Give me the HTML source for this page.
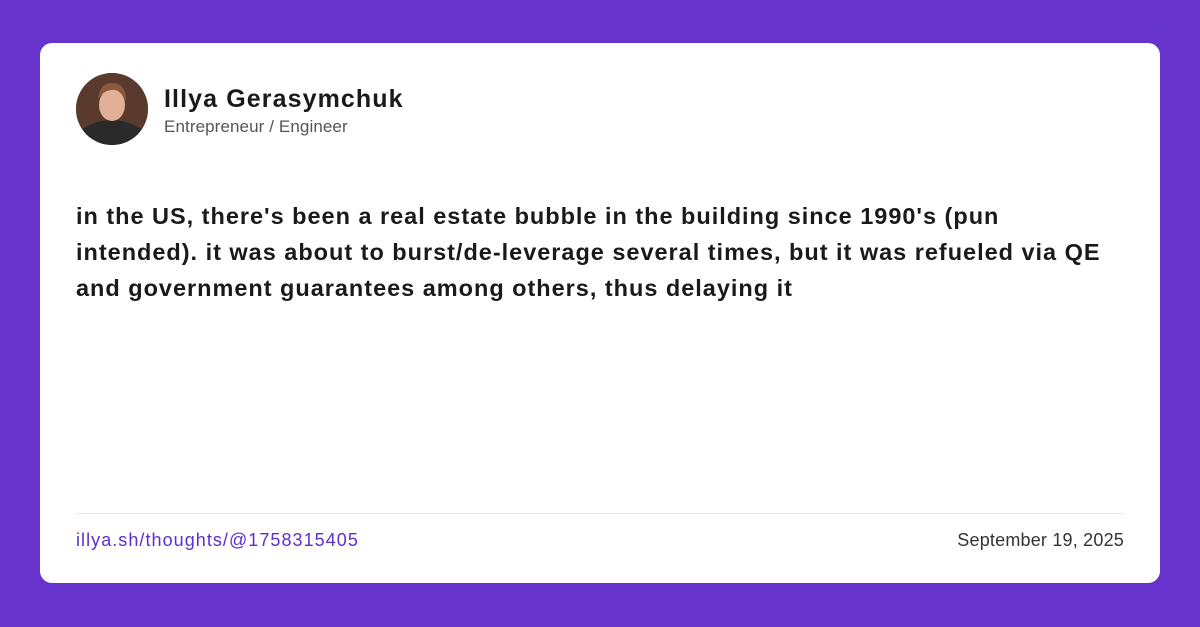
<!DOCTYPE html>
<html><head><meta charset="utf-8"><style>
*{margin:0;padding:0;box-sizing:border-box}
body{width:1200px;height:627px;background:#6633cc;font-family:"Liberation Sans",sans-serif;position:relative;overflow:hidden}
.card{position:absolute;left:40px;top:43px;width:1120px;height:540px;background:#fff;border-radius:12px}
.av{position:absolute;left:76px;top:73px;width:72px;height:72px;border-radius:50%;overflow:hidden;background:#5a3a2c}
.name{position:absolute;left:164px;top:85px;font-size:25px;font-weight:bold;color:#1a1a1a;letter-spacing:1.1px}
.role{position:absolute;left:164px;top:117px;font-size:17px;color:#555;letter-spacing:0.1px}
.txt{position:absolute;left:76px;top:198px;font-size:23.5px;font-weight:bold;color:#1a1a1a;line-height:36px;white-space:nowrap;letter-spacing:0.98px}
.hr{position:absolute;left:76px;top:513px;width:1048px;height:1px;background:#e6e6e6}
.link{position:absolute;left:76px;top:530px;font-size:18px;color:#5b2fd0;letter-spacing:1.05px}
.date{position:absolute;right:76px;top:530px;font-size:18px;color:#333;letter-spacing:0.2px}
</style></head><body>
<div class="card"></div>
<div class="av"><svg width="72" height="72"><rect width="72" height="72" fill="#5a3a2c"/><path d="M6 56 Q36 38 66 56 L66 72 L6 72Z" fill="#2a2a2a"/><ellipse cx="36" cy="32" rx="13" ry="16" fill="#e2b096"/><path d="M22 26 Q24 10 36 10 Q50 10 50 28 Q44 16 36 17 Q28 17 22 26Z" fill="#8a5a3a"/></svg></div>
<div class="name">Illya Gerasymchuk</div>
<div class="role">Entrepreneur / Engineer</div>
<div class="txt">in the US, there's been a real estate bubble in the building since 1990's (pun<br>intended). it was about to burst/de-leverage several times, but it was refueled via QE<br>and government guarantees among others, thus delaying it</div>
<div class="hr"></div>
<div class="link">illya.sh/thoughts/@1758315405</div>
<div class="date">September 19, 2025</div>
</body></html>
